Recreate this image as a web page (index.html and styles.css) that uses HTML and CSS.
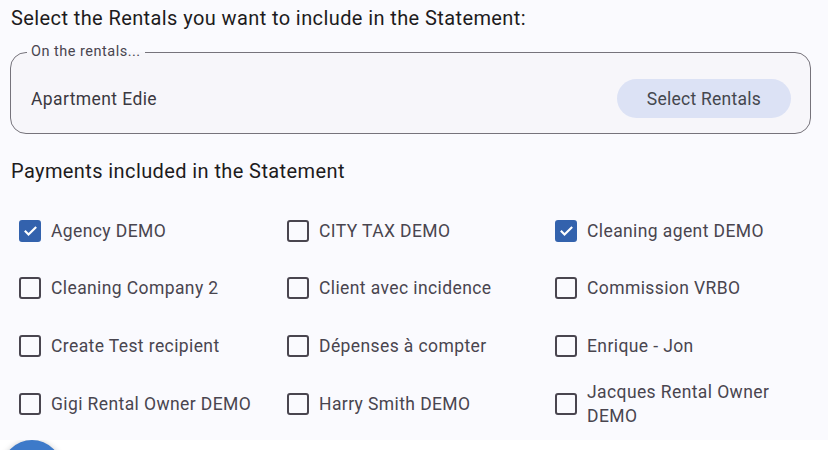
FILE: index.html
```html
<!DOCTYPE html>
<html>
<head>
<meta charset="utf-8">
<link rel="stylesheet" href="styles.css">
</head>
<body>
<div class="panel">
  <h2 class="title">Select the Rentals you want to include in the Statement:</h2>
  <fieldset class="field">
    <legend class="field-label">On the rentals...</legend>
    <div class="field-row">
      <span class="field-value">Apartment Edie</span>
      <button class="tonal-btn">Select Rentals</button>
    </div>
  </fieldset>
  <h2 class="title title-payments">Payments included in the Statement</h2>
  <div class="grid">
    <label class="item"><span class="box checked"><svg viewBox="0 0 18 18"><path d="M3 9.3l3.9 3.9L15 5.2" fill="none" stroke="#fff" stroke-width="2.3"/></svg></span><span class="text">Agency DEMO</span></label>
    <label class="item"><span class="box"></span><span class="text">CITY TAX DEMO</span></label>
    <label class="item"><span class="box checked"><svg viewBox="0 0 18 18"><path d="M3 9.3l3.9 3.9L15 5.2" fill="none" stroke="#fff" stroke-width="2.3"/></svg></span><span class="text">Cleaning agent DEMO</span></label>
    <label class="item"><span class="box"></span><span class="text">Cleaning Company 2</span></label>
    <label class="item"><span class="box"></span><span class="text">Client avec incidence</span></label>
    <label class="item"><span class="box"></span><span class="text">Commission VRBO</span></label>
    <label class="item"><span class="box"></span><span class="text">Create Test recipient</span></label>
    <label class="item"><span class="box"></span><span class="text">Dépenses à compter</span></label>
    <label class="item"><span class="box"></span><span class="text">Enrique - Jon</span></label>
    <label class="item"><span class="box"></span><span class="text">Gigi Rental Owner DEMO</span></label>
    <label class="item"><span class="box"></span><span class="text">Harry Smith DEMO</span></label>
    <label class="item"><span class="box"></span><span class="text">Jacques Rental Owner DEMO</span></label>
  </div>
</div>
<div class="footer"><div class="fab"></div></div>
</body>
</html>
```
FILE: styles.css
```css
* { box-sizing: border-box; }
html, body {
  margin: 0;
  padding: 0;
  height: 450px;
  background: #ffffff;
  font-family: Roboto, "Noto Sans", sans-serif;
  overflow: hidden;
}
.panel {
  background: #fafafe;
  height: 440px;
  padding: 6px 17px 0 10px;
}
.title {
  margin: 0 0 0 1px;
  font-size: 20px;
  font-weight: 400;
  letter-spacing: 0.4px;
  line-height: 24px;
  color: #1d1b20;
}
.field {
  margin: 14px 0 0 0;
  border: 1.5px solid #76737b;
  border-radius: 16px;
  background: #f7f6fa;
  padding: 19px 19px 15px 20px;
  min-width: 0;
}
.field-label {
  margin-left: -4px;
  padding: 0 4px;
  font-size: 14.5px;
  letter-spacing: 0.5px;
  line-height: 16px;
  color: #49454f;
}
.field-row {
  display: flex;
  align-items: center;
  justify-content: space-between;
}
.field-value {
  font-size: 17.5px;
  letter-spacing: 0.4px;
  color: #3b3940;
}
.tonal-btn {
  height: 39px;
  padding: 0 30px;
  border: none;
  border-radius: 20px;
  background: #dce2f5;
  color: #44474e;
  font-family: Roboto, "Noto Sans", sans-serif;
  font-size: 17.5px;
  letter-spacing: 0.25px;
}
.title-payments {
  margin-top: 25px;
}
.grid {
  margin-top: 19px;
  display: grid;
  grid-template-columns: repeat(3, 268px);
  grid-auto-rows: 57.6px;
}
.item {
  display: flex;
  align-items: center;
  padding-left: 9px;
  padding-right: 10px;
}
.box {
  flex: none;
  width: 22px;
  height: 22px;
  border: 2.5px solid #49454f;
  border-radius: 3px;
  display: flex;
  align-items: center;
  justify-content: center;
}
.box.checked {
  background: #3362ad;
  border-color: #3362ad;
}
.box svg {
  flex: none;
  width: 17px;
  height: 17px;
}
.text {
  margin-left: 10px;
  font-size: 17.5px;
  letter-spacing: 0.4px;
  line-height: 24px;
  color: #49454f;
}
.footer {
  position: relative;
  height: 10px;
  overflow: hidden;
}
.fab {
  position: absolute;
  left: 2px;
  top: 0;
  width: 60px;
  height: 60px;
  border-radius: 50%;
  background: #3d7ac9;
  box-shadow: 0 1px 6px rgba(0,0,0,0.25);
}
```
